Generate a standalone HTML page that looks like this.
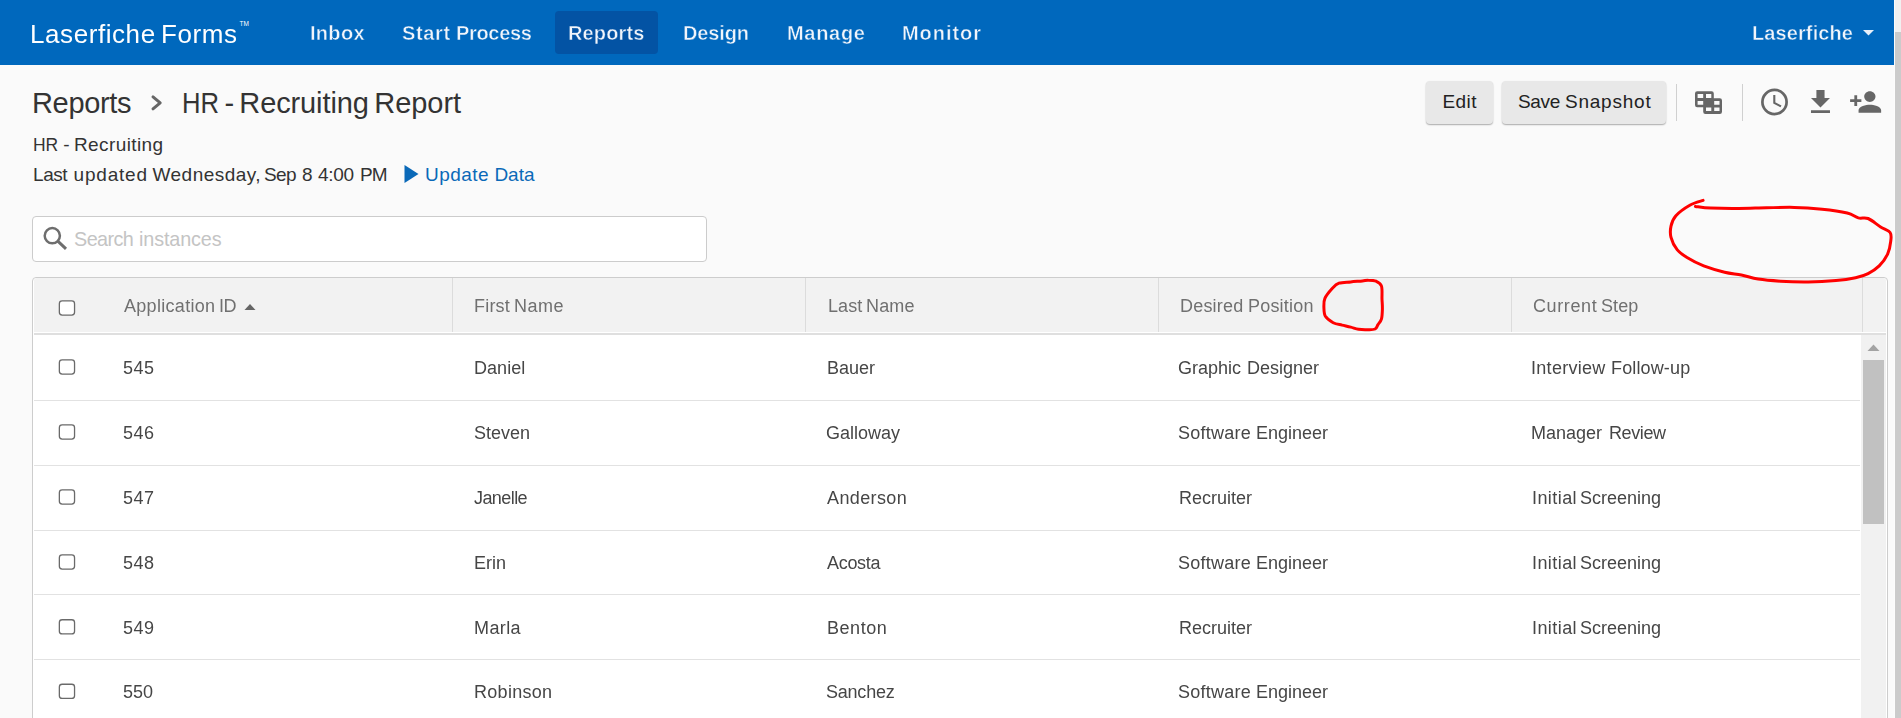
<!DOCTYPE html>
<html>
<head>
<meta charset="utf-8">
<title>HR - Recruiting Report</title>
<style>
html,body{margin:0;padding:0;}
body{width:1901px;height:718px;overflow:hidden;position:relative;background:#fafafa;font-family:"Liberation Sans",sans-serif;color:#333;}
.abs{position:absolute;white-space:nowrap;line-height:1;}
#nav{position:absolute;left:0;top:0;width:1894px;height:65px;background:#0068bd;}
#active{position:absolute;left:555px;top:11px;width:103px;height:43px;background:#0353a4;border-radius:4px;}
.brand{will-change:transform;color:#fff;font-size:26px;}
.nv{will-change:transform;color:#f1f5fb;font-size:20px;font-weight:bold;-webkit-text-stroke:0.45px #0068bd;}
#n3{-webkit-text-stroke-color:#0353a4;}
.h1{font-size:29px;color:#333;}
.sub{font-size:19px;color:#333;}
.th{will-change:transform;font-size:18px;color:#707070;}
.td{will-change:transform;font-size:18px;color:#464646;}
.btn{position:absolute;top:81px;height:42.5px;background:#e8e8e8;border-radius:4px;box-shadow:0 1px 1.5px rgba(0,0,0,.32);}
.cb{position:absolute;left:58.8px;width:13.4px;height:13px;border:1.5px solid #606060;border-radius:3.5px;background:#fff;margin-top:0.5px;}
.rowline{position:absolute;left:34px;width:1826px;height:1px;background:#e2e2e2;}
.colsep{position:absolute;top:278px;width:1px;height:54px;background:#dcdcdc;}
</style>
</head>
<body>
<!-- NAVBAR -->
<div id="nav"></div>
<div id="active"></div>
<div class="abs brand" id="brandw1" style="left:30.2px;top:21px;letter-spacing:0.57px;">Laserfiche</div>
<div class="abs brand" id="brandw2" style="left:161.4px;top:21px;letter-spacing:0.56px;">Forms</div>
<div class="abs" id="tm" style="left:239.5px;top:21px;color:#fff;font-size:6.5px;">TM</div>
<div class="abs nv" id="n1" style="left:310px;top:23px;letter-spacing:0.3px;">Inbox</div>
<div class="abs nv" id="n2w1" style="left:402.4px;top:23px;letter-spacing:0.65px;">Start</div>
<div class="abs nv" id="n2w2" style="left:455.8px;top:23px;letter-spacing:-0.33px;">Process</div>
<div class="abs nv" id="n3" style="left:568px;top:23px;letter-spacing:0.15px;">Reports</div>
<div class="abs nv" id="n4" style="left:683px;top:23px;letter-spacing:-0.15px;">Design</div>
<div class="abs nv" id="n5" style="left:786.5px;top:23px;letter-spacing:0.70px;">Manage</div>
<div class="abs nv" id="n6" style="left:902px;top:23px;letter-spacing:0.94px;">Monitor</div>
<div class="abs nv" id="n7" style="left:1751.8px;top:23px;letter-spacing:0.1px;">Laserfiche</div>
<svg class="abs" style="left:1863px;top:30px;" width="11" height="6"><path d="M0 0H11L5.5 5.5Z" fill="#e8f0fa"/></svg>

<!-- PAGE SCROLLBAR -->
<div style="position:absolute;left:1894px;top:0;width:7px;height:718px;background:#fcfcfc;"></div>
<div style="position:absolute;left:1895px;top:0;width:6px;height:32px;background:#f1f1f1;"></div>
<div style="position:absolute;left:1895px;top:32px;width:6px;height:686px;background:#cbcbcb;"></div>

<!-- HEADING -->
<div class="abs h1" id="h1a" style="left:32px;top:89px;letter-spacing:-0.34px;">Reports</div>
<svg class="abs" style="left:148px;top:92px;" width="18" height="22" viewBox="148 92 18 22"><path d="M153 96.9L160.2 102.85L153 108.8" fill="none" stroke="#666" stroke-width="3" stroke-linecap="round" stroke-linejoin="round"/></svg>
<div class="abs h1" id="h1b1" style="left:181.6px;top:89px;letter-spacing:0px;transform:scaleX(0.885);transform-origin:0 0;">HR</div>
<div class="abs h1" id="h1b2" style="left:224.5px;top:89px;letter-spacing:0px;">-</div>
<div class="abs h1" id="h1b3" style="left:239.3px;top:89px;letter-spacing:-0.11px;">Recruiting</div>
<div class="abs h1" id="h1b4" style="left:374.3px;top:89px;letter-spacing:-0.05px;">Report</div>
<div class="abs sub" id="s1a" style="left:33px;top:135px;letter-spacing:0px;transform:scaleX(0.92);transform-origin:0 0;">HR</div>
<div class="abs sub" id="s1b" style="left:63.3px;top:135px;letter-spacing:0px;">-</div>
<div class="abs sub" id="s1c" style="left:74px;top:135px;letter-spacing:0.39px;">Recruiting</div>
<div class="abs sub" id="s2a" style="left:33px;top:165px;letter-spacing:-0.42px;">Last</div>
<div class="abs sub" id="s2b" style="left:73.6px;top:165px;letter-spacing:0.79px;">updated</div>
<div class="abs sub" id="s2c" style="left:152.5px;top:165px;letter-spacing:0.47px;">Wednesday,</div>
<div class="abs sub" id="s2d" style="left:264px;top:165px;letter-spacing:-0.6px;">Sep</div>
<div class="abs sub" id="s2e" style="left:302px;top:165px;">8</div>
<div class="abs sub" id="s2f" style="left:318px;top:165px;letter-spacing:-0.3px;">4:00</div>
<div class="abs sub" id="s2g" style="left:360px;top:165px;letter-spacing:-0.8px;">PM</div>
<svg class="abs" style="left:404px;top:165px;" width="15" height="18"><path d="M0.5 0L14.5 9L0.5 18Z" fill="#0a69b8"/></svg>
<div class="abs sub" id="s3w1" style="left:425.0px;top:165px;color:#0a69b8;letter-spacing:0.46px;">Update</div>
<div class="abs sub" id="s3w2" style="left:494.4px;top:165px;color:#0a69b8;">Data</div>

<!-- BUTTONS -->
<div class="btn" style="left:1426px;width:67px;"></div>
<div class="btn" style="left:1502px;width:164px;"></div>
<div class="abs" id="b1" style="left:1442.5px;top:92px;font-size:19px;color:#222;letter-spacing:0.4px;">Edit</div>
<div class="abs" id="b2a" style="left:1518px;top:92px;font-size:19px;color:#222;letter-spacing:-0.33px;">Save</div>
<div class="abs" id="b2b" style="left:1565px;top:92px;font-size:19px;color:#222;letter-spacing:0.77px;">Snapshot</div>
<div style="position:absolute;left:1676px;top:84px;width:1px;height:37px;background:#d0d0d0;"></div>
<div style="position:absolute;left:1742px;top:84px;width:1px;height:37px;background:#d0d0d0;"></div>


<!-- ICONS -->
<svg class="abs" style="left:1690px;top:86px;" width="36" height="32" viewBox="1690 86 36 32"><path fill="#666" fill-rule="evenodd" d="M1697.2 91.2H1711.6Q1713.8 91.2 1713.8 93.4V98.2H1719.8Q1722 98.2 1722 100.4V111.7Q1722 113.9 1719.8 113.9H1705.4Q1703.2 113.9 1703.2 111.7V107.3H1697.2Q1695 107.3 1695 105.1V93.4Q1695 91.2 1697.2 91.2Z M1697.6 94.1H1703.2V97.9H1697.6Z M1706 94.1H1711.3V97.9H1706Z M1697.6 101H1703.2V104.8H1697.6Z M1714.2 101H1719.5V104.8H1714.2Z M1706 107.6H1711.3V111.1H1706Z M1714.2 107.6H1719.5V111.1H1714.2Z"/></svg>
<svg class="abs" style="left:1758px;top:86px;" width="34" height="32" viewBox="1758 86 34 32"><circle cx="1774.5" cy="102" r="12.1" fill="none" stroke="#666" stroke-width="2.7"/><path d="M1774.3 95V102.9L1781 106.4" fill="none" stroke="#666" stroke-width="2.1"/></svg>
<svg class="abs" style="left:1804px;top:86px;" width="34" height="32" viewBox="0 0 34 32"><g transform="translate(0.2,-0.05) scale(1.357,1.347)"><path fill="#666" d="M19 9h-4V3H9v6H5l7 7 7-7zM5 18v2h14v-2H5z"/></g></svg>
<svg class="abs" style="left:1848px;top:85px;" width="36" height="32" viewBox="0 0 36 32"><g transform="translate(0.7,0.75) scale(1.41,1.35)"><path fill="#666" d="M15 12c2.21 0 4-1.79 4-4s-1.79-4-4-4-4 1.79-4 4 1.79 4 4 4zm-9-2V7H4v3H1v2h3v3h2v-3h3v-2H6zm9 4c-2.67 0-8 1.34-8 4v2h16v-2c0-2.66-5.33-4-8-4z"/></g></svg>

<!-- SEARCH -->
<div style="position:absolute;left:32px;top:216px;width:673px;height:44px;border:1px solid #ccc;border-radius:4px;background:#fff;"></div>
<svg class="abs" style="left:42px;top:226px;" width="26" height="26" viewBox="0 0 26 26"><circle cx="10.3" cy="9.7" r="7.6" fill="none" stroke="#6e6e6e" stroke-width="2.5"/><path d="M15.8 15.2L24 22.8" stroke="#6e6e6e" stroke-width="3"/></svg>
<div class="abs" id="phw1" style="left:74.1px;top:230px;font-size:19.8px;color:#c4c4c4;letter-spacing:-0.62px;">Search</div>
<div class="abs" id="phw2" style="left:139.0px;top:230px;font-size:19.8px;color:#c4c4c4;letter-spacing:-0.12px;">instances</div>

<!-- TABLE -->
<div style="position:absolute;left:32px;top:277px;width:1854px;height:450px;border:1px solid #cdcdcd;border-radius:4px 4px 0 0;background:#fff;"></div>
<div style="position:absolute;left:34px;top:278px;width:1852px;height:54px;background:#f2f2f2;border-radius:3px 3px 0 0;"></div>
<div style="position:absolute;left:34px;top:333px;width:1852px;height:2px;background:#dfdfdf;"></div>
<div class="colsep" style="left:452px;"></div>
<div class="colsep" style="left:805px;"></div>
<div class="colsep" style="left:1158px;"></div>
<div class="colsep" style="left:1511px;"></div>
<div class="colsep" style="left:1862px;"></div>
<svg class="abs" style="left:58px;top:299px;" width="19" height="18" viewBox="58 299 19 18"><rect x="59.35" y="300.95" width="15.2" height="14.2" rx="2.8" fill="#fff" stroke="#6a6a6a" stroke-width="1.3"/></svg>
<div class="abs th" id="t1w1" style="left:123.7px;top:297px;letter-spacing:0.30px;">Application</div>
<div class="abs th" id="t1w2" style="left:219.2px;top:297px;letter-spacing:-0.5px;">ID</div>
<svg class="abs" style="left:244px;top:303px;" width="12" height="8"><path d="M0.5 7L6 0.9L11.5 7Z" fill="#666"/></svg>
<div class="abs th" id="t2w1" style="left:474.0px;top:297px;letter-spacing:0.20px;">First</div>
<div class="abs th" id="t2w2" style="left:514.0px;top:297px;letter-spacing:0.50px;">Name</div>
<div class="abs th" id="t3w1" style="left:827.5px;top:297px;letter-spacing:0.1px;">Last</div>
<div class="abs th" id="t3w2" style="left:865.9px;top:297px;letter-spacing:0.15px;">Name</div>
<div class="abs th" id="t4w1" style="left:1180.2px;top:297px;letter-spacing:0.2px;">Desired</div>
<div class="abs th" id="t4w2" style="left:1248.2px;top:297px;letter-spacing:0.2px;">Position</div>
<div class="abs th" id="t5w1" style="left:1532.5px;top:297px;letter-spacing:0.62px;">Current</div>
<div class="abs th" id="t5w2" style="left:1600.8px;top:297px;letter-spacing:0.07px;">Step</div>

<!-- inner scrollbar -->
<div style="position:absolute;left:1861px;top:335px;width:25px;height:383px;background:#f1f1f1;"></div>
<div style="position:absolute;left:1863px;top:360px;width:21px;height:164px;background:#c1c1c1;"></div>
<svg class="abs" style="left:1867px;top:344px;" width="13" height="8"><path d="M0.5 7L6.5 0.5L12.5 7Z" fill="#a3a3a3"/></svg>

<!-- ROWS -->
<div class="rowline" style="top:400px;"></div>
<div class="rowline" style="top:465px;"></div>
<div class="rowline" style="top:530px;"></div>
<div class="rowline" style="top:594px;"></div>
<div class="rowline" style="top:659px;"></div>

<svg class="abs" style="left:58px;top:358px;" width="19" height="18" viewBox="58 358 19 18"><rect x="59.35" y="359.95" width="15.2" height="14.2" rx="2.8" fill="#fff" stroke="#6a6a6a" stroke-width="1.3"/></svg>
<svg class="abs" style="left:58px;top:423px;" width="19" height="18" viewBox="58 423 19 18"><rect x="59.35" y="424.85" width="15.2" height="14.2" rx="2.8" fill="#fff" stroke="#6a6a6a" stroke-width="1.3"/></svg>
<svg class="abs" style="left:58px;top:488px;" width="19" height="18" viewBox="58 488 19 18"><rect x="59.35" y="489.95" width="15.2" height="14.2" rx="2.8" fill="#fff" stroke="#6a6a6a" stroke-width="1.3"/></svg>
<svg class="abs" style="left:58px;top:553px;" width="19" height="18" viewBox="58 553 19 18"><rect x="59.35" y="554.85" width="15.2" height="14.2" rx="2.8" fill="#fff" stroke="#6a6a6a" stroke-width="1.3"/></svg>
<svg class="abs" style="left:58px;top:618px;" width="19" height="18" viewBox="58 618 19 18"><rect x="59.35" y="619.75" width="15.2" height="14.2" rx="2.8" fill="#fff" stroke="#6a6a6a" stroke-width="1.3"/></svg>
<svg class="abs" style="left:58px;top:682px;" width="19" height="18" viewBox="58 682 19 18"><rect x="59.35" y="684.25" width="15.2" height="14.2" rx="2.8" fill="#fff" stroke="#6a6a6a" stroke-width="1.3"/></svg>

<div class="abs td" id="r1a" style="left:123px;top:359px;letter-spacing:0.55px;">545</div>
<div class="abs td" id="r1b" style="left:474px;top:359px;letter-spacing:0.04px;">Daniel</div>
<div class="abs td" id="r1c" style="left:827px;top:359px;">Bauer</div>
<div class="abs td" id="r1dw1" style="left:1178.1px;top:359px;">Graphic</div>
<div class="abs td" id="r1dw2" style="left:1247.4px;top:359px;">Designer</div>
<div class="abs td" id="r1ew1" style="left:1530.7px;top:359px;letter-spacing:0.29px;">Interview</div>
<div class="abs td" id="r1ew2" style="left:1611.1px;top:359px;letter-spacing:0.14px;">Follow-up</div>

<div class="abs td" id="r2a" style="left:123px;top:424px;letter-spacing:0.55px;">546</div>
<div class="abs td" id="r2b" style="left:474px;top:424px;">Steven</div>
<div class="abs td" id="r2c" style="left:826.0px;top:424px;">Galloway</div>
<div class="abs td" id="r2dw1" style="left:1178.1px;top:424px;letter-spacing:0.23px;">Software</div>
<div class="abs td" id="r2dw2" style="left:1256.2px;top:424px;">Engineer</div>
<div class="abs td" id="r2ew1" style="left:1530.7px;top:424px;">Manager</div>
<div class="abs td" id="r2ew2" style="left:1608.9px;top:424px;letter-spacing:-0.4px;">Review</div>

<div class="abs td" id="r3a" style="left:123px;top:489px;letter-spacing:0.55px;">547</div>
<div class="abs td" id="r3b" style="left:474px;top:489px;letter-spacing:-0.58px;">Janelle</div>
<div class="abs td" id="r3c" style="left:827px;top:489px;letter-spacing:0.39px;">Anderson</div>
<div class="abs td" id="r3d" style="left:1178.6px;top:489px;">Recruiter</div>
<div class="abs td" id="r3ew1" style="left:1531.6px;top:489px;letter-spacing:0.43px;">Initial</div>
<div class="abs td" id="r3ew2" style="left:1580.3px;top:489px;">Screening</div>

<div class="abs td" id="r4a" style="left:123px;top:554px;letter-spacing:0.55px;">548</div>
<div class="abs td" id="r4b" style="left:474px;top:554px;">Erin</div>
<div class="abs td" id="r4c" style="left:827px;top:554px;letter-spacing:-0.30px;">Acosta</div>
<div class="abs td" id="r4dw1" style="left:1178.1px;top:554px;letter-spacing:0.23px;">Software</div>
<div class="abs td" id="r4dw2" style="left:1256.2px;top:554px;">Engineer</div>
<div class="abs td" id="r4ew1" style="left:1531.6px;top:554px;letter-spacing:0.43px;">Initial</div>
<div class="abs td" id="r4ew2" style="left:1580.3px;top:554px;">Screening</div>

<div class="abs td" id="r5a" style="left:123px;top:619px;letter-spacing:0.55px;">549</div>
<div class="abs td" id="r5b" style="left:474px;top:619px;letter-spacing:0.40px;">Marla</div>
<div class="abs td" id="r5c" style="left:827px;top:619px;letter-spacing:0.54px;">Benton</div>
<div class="abs td" id="r5d" style="left:1178.6px;top:619px;">Recruiter</div>
<div class="abs td" id="r5ew1" style="left:1531.6px;top:619px;letter-spacing:0.43px;">Initial</div>
<div class="abs td" id="r5ew2" style="left:1580.3px;top:619px;">Screening</div>

<div class="abs td" id="r6a" style="left:123px;top:683px;">550</div>
<div class="abs td" id="r6b" style="left:474px;top:683px;letter-spacing:0.29px;">Robinson</div>
<div class="abs td" id="r6c" style="left:825.7px;top:683px;letter-spacing:-0.22px;">Sanchez</div>
<div class="abs td" id="r6dw1" style="left:1178.1px;top:683px;letter-spacing:0.23px;">Software</div>
<div class="abs td" id="r6dw2" style="left:1256.2px;top:683px;">Engineer</div>


<!-- RED ANNOTATIONS -->
<svg class="abs" style="left:0;top:0;pointer-events:none;" width="1901" height="718" viewBox="0 0 1901 718"><path d="M1703.1 200.4 C1700.9 201.2 1694.3 202.7 1689.8 205.3 C1685.3 207.9 1679.0 212.3 1675.9 215.8 C1672.8 219.3 1671.8 222.6 1671.0 226.2 C1670.2 229.8 1670.0 233.4 1671.0 237.4 C1672.0 241.4 1674.6 246.6 1677.3 249.9 C1680.0 253.2 1682.6 254.8 1687.0 257.5 C1691.4 260.2 1697.4 263.4 1703.7 265.9 C1710.0 268.3 1718.3 270.7 1724.6 272.2 C1730.9 273.7 1735.8 273.9 1741.4 275.0 C1747.0 276.1 1751.6 278.1 1758.1 279.1 C1764.6 280.1 1771.9 280.7 1780.3 281.2 C1788.7 281.7 1798.9 282.0 1808.2 281.9 C1817.5 281.8 1828.1 281.2 1836.0 280.5 C1843.9 279.8 1850.2 278.8 1855.6 277.7 C1860.9 276.6 1864.2 275.6 1868.1 273.6 C1872.0 271.6 1876.0 269.1 1879.2 265.9 C1882.5 262.6 1885.7 258.2 1887.6 254.1 C1889.5 250.0 1890.3 245.1 1890.7 241.5 C1891.1 237.9 1891.8 234.9 1890.1 232.5 C1888.4 230.1 1884.3 229.2 1880.6 226.9 C1876.9 224.6 1871.8 220.0 1868.1 218.5 C1864.4 217.0 1861.8 218.8 1858.3 217.9 C1854.8 217.0 1853.2 214.4 1847.2 213.0 C1841.2 211.6 1830.9 210.1 1822.1 209.2 C1813.3 208.3 1803.6 207.6 1794.3 207.4 C1785.0 207.2 1775.7 207.6 1766.4 207.8 C1757.1 208.0 1747.9 208.4 1738.6 208.5 C1729.3 208.6 1717.9 208.4 1710.7 208.1 C1703.5 207.8 1698.0 206.7 1695.4 206.4" fill="none" stroke="#ff0000" stroke-width="3" stroke-linecap="round" stroke-linejoin="round"/><path d="M1339.0 283.2 C1342.1 282.1 1346.8 282.3 1350.7 281.9 C1354.6 281.5 1359.5 281.2 1362.4 280.9 C1365.3 280.6 1366.0 280.1 1368.3 280.2 C1370.6 280.2 1373.9 280.2 1376.1 281.2 C1378.3 282.2 1380.5 283.1 1381.5 286.1 C1382.5 289.1 1381.8 295.5 1382.0 299.3 C1382.2 303.1 1382.5 305.8 1382.4 309.0 C1382.3 312.2 1382.2 316.2 1381.5 318.8 C1380.8 321.4 1379.1 322.9 1378.0 324.6 C1376.9 326.3 1376.9 328.1 1375.1 329.0 C1373.3 329.9 1370.1 329.6 1367.3 329.7 C1364.5 329.8 1361.3 329.7 1358.5 329.3 C1355.7 328.9 1353.5 327.8 1350.7 327.1 C1348.0 326.4 1344.9 325.8 1342.0 325.1 C1339.1 324.4 1336.0 324.2 1333.2 322.7 C1330.4 321.2 1327.0 318.9 1325.4 316.3 C1323.9 313.7 1324.0 310.1 1323.9 307.1 C1323.8 304.1 1323.5 301.4 1324.9 298.3 C1326.3 295.2 1329.9 291.0 1332.2 288.5 C1334.5 286.0 1335.9 284.3 1339.0 283.2Z" fill="none" stroke="#ff0000" stroke-width="3" stroke-linecap="round" stroke-linejoin="round"/></svg>

</body>
</html>
